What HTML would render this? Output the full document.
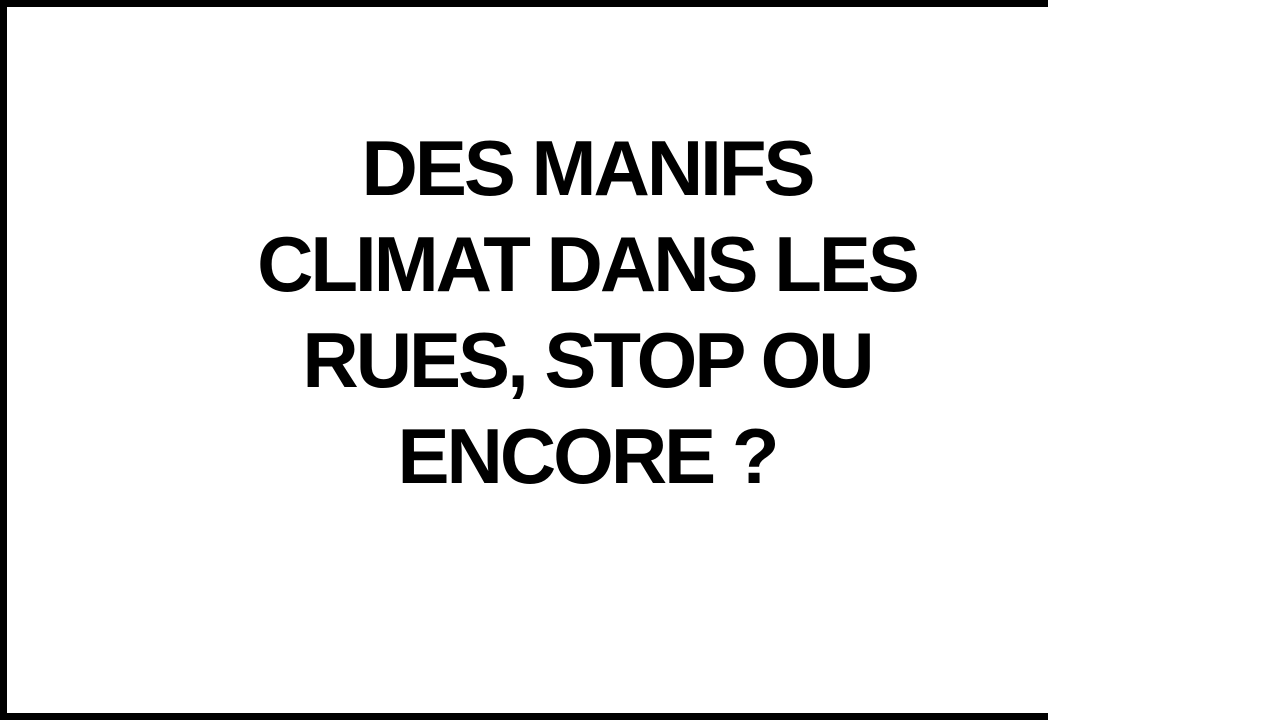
<!DOCTYPE html>
<html><head><style>
body{margin:0;width:1280px;height:720px;background:#fff;position:relative;overflow:hidden}
.t{position:absolute;left:0;top:0;width:1048px;height:7px;background:#000}
.l{position:absolute;left:0;top:0;width:7px;height:720px;background:#000}
.b{position:absolute;left:0;top:713px;width:1048px;height:7px;background:#000}
.txt{position:absolute;left:87px;width:1000px;top:120px;text-align:center;font-family:"Liberation Sans",Arial,sans-serif;font-weight:bold;font-size:78px;line-height:96px;letter-spacing:-3px;color:#000}
</style></head><body>
<div class="t"></div><div class="l"></div><div class="b"></div>
<div class="txt">DES MANIFS<br>CLIMAT DANS LES<br>RUES, STOP OU<br>ENCORE ?</div>
</body></html>
